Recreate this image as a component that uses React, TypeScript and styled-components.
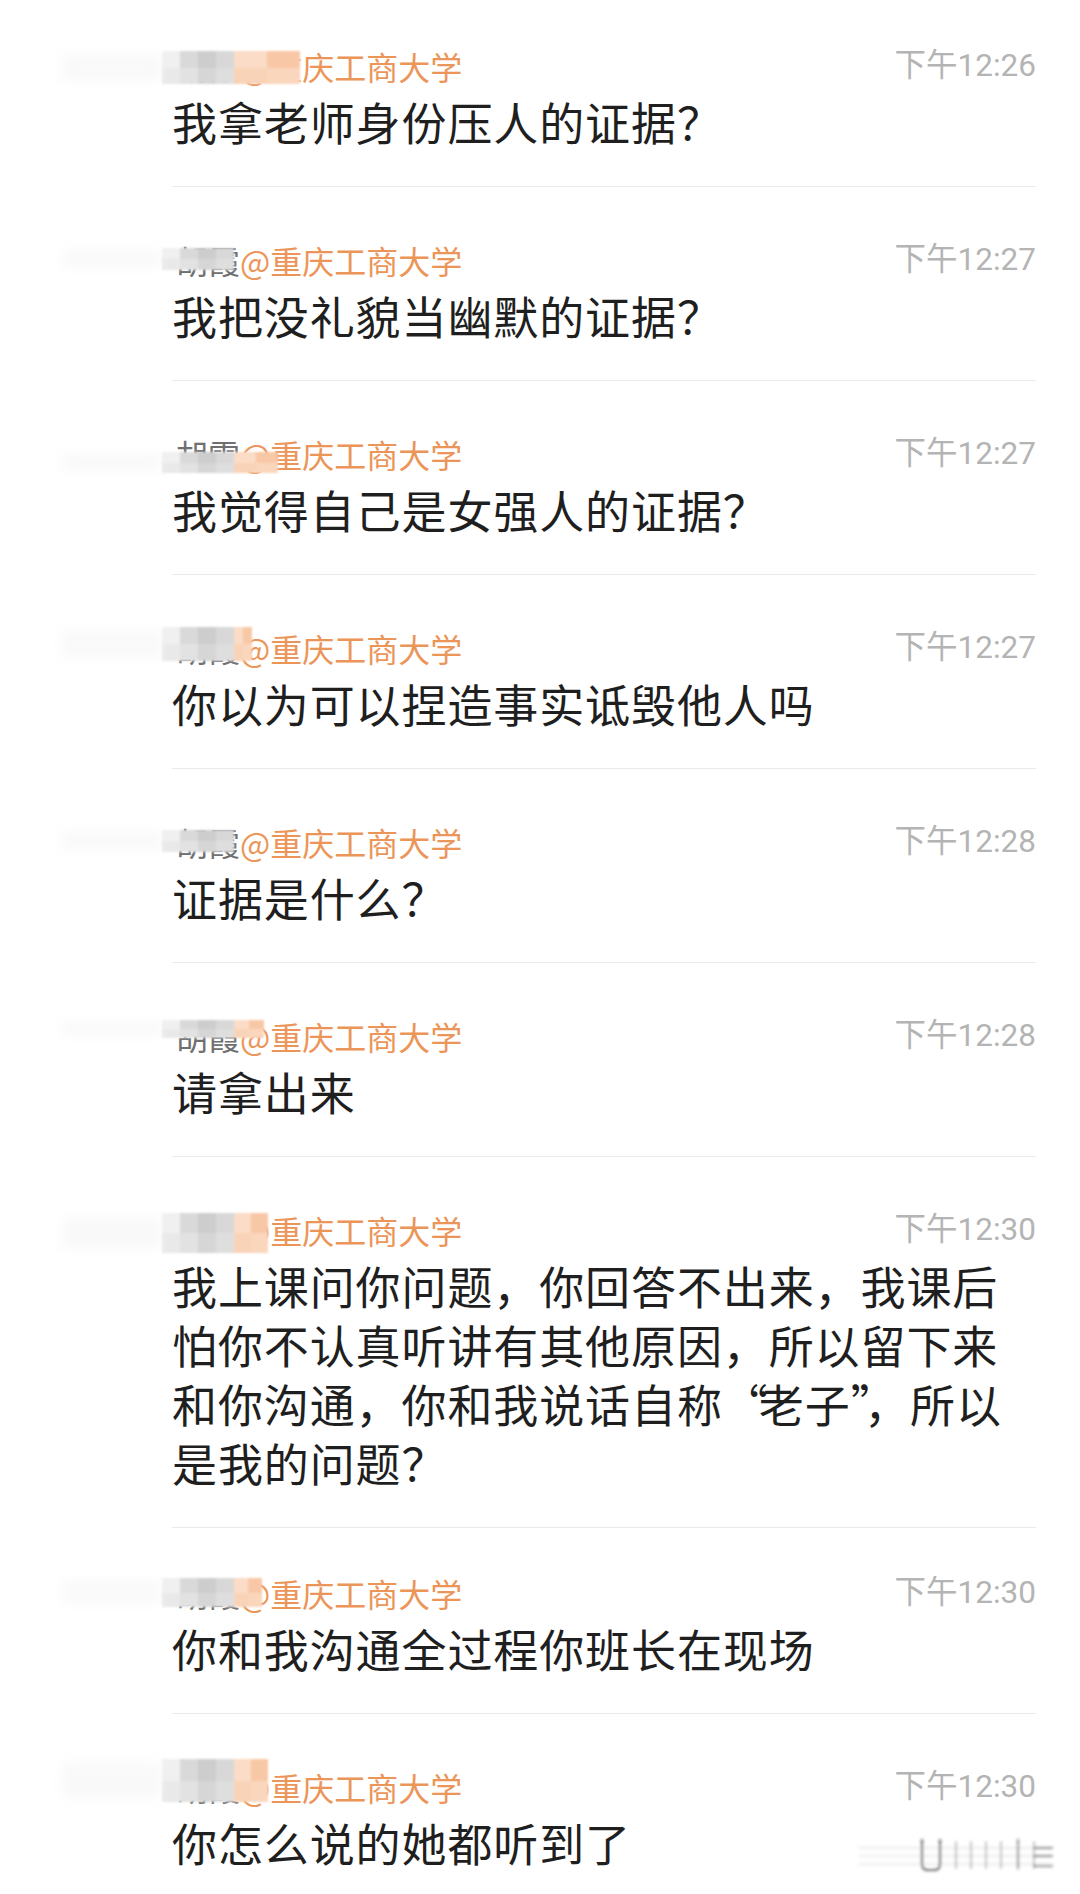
import React from 'react';
import styled, { createGlobalStyle } from 'styled-components';

const GlobalStyle = createGlobalStyle`
  html, body { margin: 0; padding: 0; background: #ffffff; }
  body { font-family: "Noto Sans CJK SC", "Noto Sans", sans-serif; }
`;

const Page = styled.div`
  position: relative;
  width: 1080px;
  height: 1894px;
  overflow: hidden;
  background: #ffffff;
`;

const List = styled.div`
  display: flex;
  flex-direction: column;
  padding: 0 44px 0 172px;
`;

const Row = styled.div<{ $pt: number }>`
  padding: ${(p) => p.$pt}px 0 35px;
  border-bottom: 1px solid #e9e9e9;
  &:last-child { border-bottom: none; }
`;

const Header = styled.div`
  display: flex;
  justify-content: space-between;
  align-items: center;
  height: 36px;
`;

const Author = styled.div`
  position: relative;
  padding-left: 4px;
  font-size: 32px;
  line-height: 36px;
  color: #707070;
  white-space: nowrap;
`;

const School = styled.span`
  color: #ec9559;
`;

const Time = styled.span`
  font-family: Roboto, "Noto Sans CJK SC", sans-serif;
  font-size: 31.5px;
  line-height: 36px;
  color: #b4b4b4;
  white-space: nowrap;
`;

const Body = styled.div`
  margin-top: 8px;
  font-size: 45px;
  line-height: 59px;
  letter-spacing: 0.9px;
  color: #1f1f1f;
`;

const Line = styled.div`
  white-space: nowrap;
`;

const Quote = styled.span`
  letter-spacing: -9px;
`;

const Mosaic = styled.div<{ $top: number; $h: number }>`
  position: absolute;
  left: -10px;
  top: ${(p) => p.$top}px;
  height: ${(p) => p.$h}px;
  display: flex;
  filter: blur(1.2px);
`;

const Smear = styled.div`
  position: absolute;
  right: 100%;
  top: 10%;
  width: 100px;
  height: 80%;
  background: #f3f3f3;
  filter: blur(6px);
  opacity: 0.5;
`;

const Tile = styled.div<{ $w: number; $c: string; $c2: string }>`
  width: ${(p) => p.$w}px;
  height: 100%;
  display: flex;
  flex-direction: column;
  &::before, &::after {
    content: "";
    flex: 1;
  }
  &::before { background: ${(p) => p.$c}; }
  &::after { background: ${(p) => p.$c2}; }
`;

const Watermark = styled.svg`
  position: absolute;
  right: 24px;
  bottom: 20px;
`;

type Msg = {
  name: string;
  time: string;
  lines: string[];
  m: { top: number; h: number; orange: number };
  pt: number;
};

const msgs: Msg[] = [
  { name: '胡霞', time: '下午12:26', lines: ['我拿老师身份压人的证据？'], m: { top: 3, h: 33, orange: 66 }, pt: 48 },
  { name: '胡霞', time: '下午12:27', lines: ['我把没礼貌当幽默的证据？'], m: { top: 6, h: 22, orange: 0 }, pt: 55 },
  { name: '胡雷', time: '下午12:27', lines: ['我觉得自己是女强人的证据？'], m: { top: 16, h: 21, orange: 44 }, pt: 55 },
  { name: '胡霞', time: '下午12:27', lines: ['你以为可以捏造事实诋毁他人吗'], m: { top: -3, h: 34, orange: 18 }, pt: 55 },
  { name: '胡霞', time: '下午12:28', lines: ['证据是什么？'], m: { top: 6, h: 22, orange: 0 }, pt: 55 },
  { name: '胡霞', time: '下午12:28', lines: ['请拿出来'], m: { top: 2, h: 18, orange: 30 }, pt: 55 },
  {
    name: '胡霞',
    time: '下午12:30',
    lines: [
      '我上课问你问题，你回答不出来，我课后',
      '怕你不认真听讲有其他原因，所以留下来',
      '和你沟通，你和我说话自称“老子”，所以',
      '是我的问题？',
    ],
    m: { top: 1, h: 40, orange: 34 },
    pt: 55,
  },
  { name: '胡霞', time: '下午12:30', lines: ['你和我沟通全过程你班长在现场'], m: { top: 3, h: 29, orange: 28 }, pt: 47 },
  { name: '胡霞', time: '下午12:30', lines: ['你怎么说的她都听到了'], m: { top: -10, h: 43, orange: 34 }, pt: 55 },
];

const renderLine = (text: string) =>
  text.split(/([“”])/).map((part, k) =>
    part === '“' || part === '”' ? <Quote key={k}>{part}</Quote> : <React.Fragment key={k}>{part}</React.Fragment>
  );

const Redaction: React.FC<{ top: number; h: number; orange: number }> = ({ top, h, orange }) => (
  <Mosaic $top={top} $h={h}>
    <Smear />
    <Tile $w={18} $c="#f0f0f0" $c2="#e9e9e9" />
    <Tile $w={18} $c="#d9d9d9" $c2="#e2e2e2" />
    <Tile $w={18} $c="#cdcdcd" $c2="#d6d6d6" />
    <Tile $w={18} $c="#d8d8d8" $c2="#dedede" />
    {orange > 0 && <Tile $w={Math.ceil(orange / 2)} $c="#fbdcc6" $c2="#f9d3b8" />}
    {orange > 0 && <Tile $w={Math.floor(orange / 2)} $c="#f8c8a6" $c2="#fad6bd" />}
  </Mosaic>
);

export default function App() {
  return (
    <Page>
      <GlobalStyle />
      <List>
        {msgs.map((msg, i) => (
          <Row key={i} $pt={msg.pt}>
            <Header>
              <Author>
                {msg.name}
                <School>@重庆工商大学</School>
                <Redaction top={msg.m.top} h={msg.m.h} orange={msg.m.orange} />
              </Author>
              <Time>{msg.time}</Time>
            </Header>
            <Body>
              {msg.lines.map((l, j) => (
                <Line key={j}>{renderLine(l)}</Line>
              ))}
            </Body>
          </Row>
        ))}
      </List>
      <Watermark width="200" height="40" viewBox="0 0 200 40">
        <defs>
          <filter id="wmblur" x="-20%" y="-40%" width="140%" height="180%">
            <feGaussianBlur stdDeviation="1.6" />
          </filter>
        </defs>
        <g filter="url(#wmblur)" fill="none" strokeLinecap="round">
          <path d="M4 14 H196 M4 22 H196 M4 30 H196" stroke="#f1f1f1" strokeWidth="3" />
          <path d="M66 6 V30 Q66 36 72 36 H78 Q84 36 84 30 V6" stroke="#3a3a3a" strokeWidth="2.2" opacity="0.75" />
          <path d="M100 8 V34 M115 8 V34 M130 8 V34 M145 8 V34" stroke="#9a9a9a" strokeWidth="2" opacity="0.6" />
          <path d="M162 6 V34" stroke="#5a5a5a" strokeWidth="2.4" opacity="0.6" />
          <path d="M178 8 V34" stroke="#9a9a9a" strokeWidth="2" opacity="0.6" />
          <path d="M178 14 H196 M178 22 H196 M178 32 H196" stroke="#555" strokeWidth="2" opacity="0.7" />
        </g>
      </Watermark>
    </Page>
  );
}
